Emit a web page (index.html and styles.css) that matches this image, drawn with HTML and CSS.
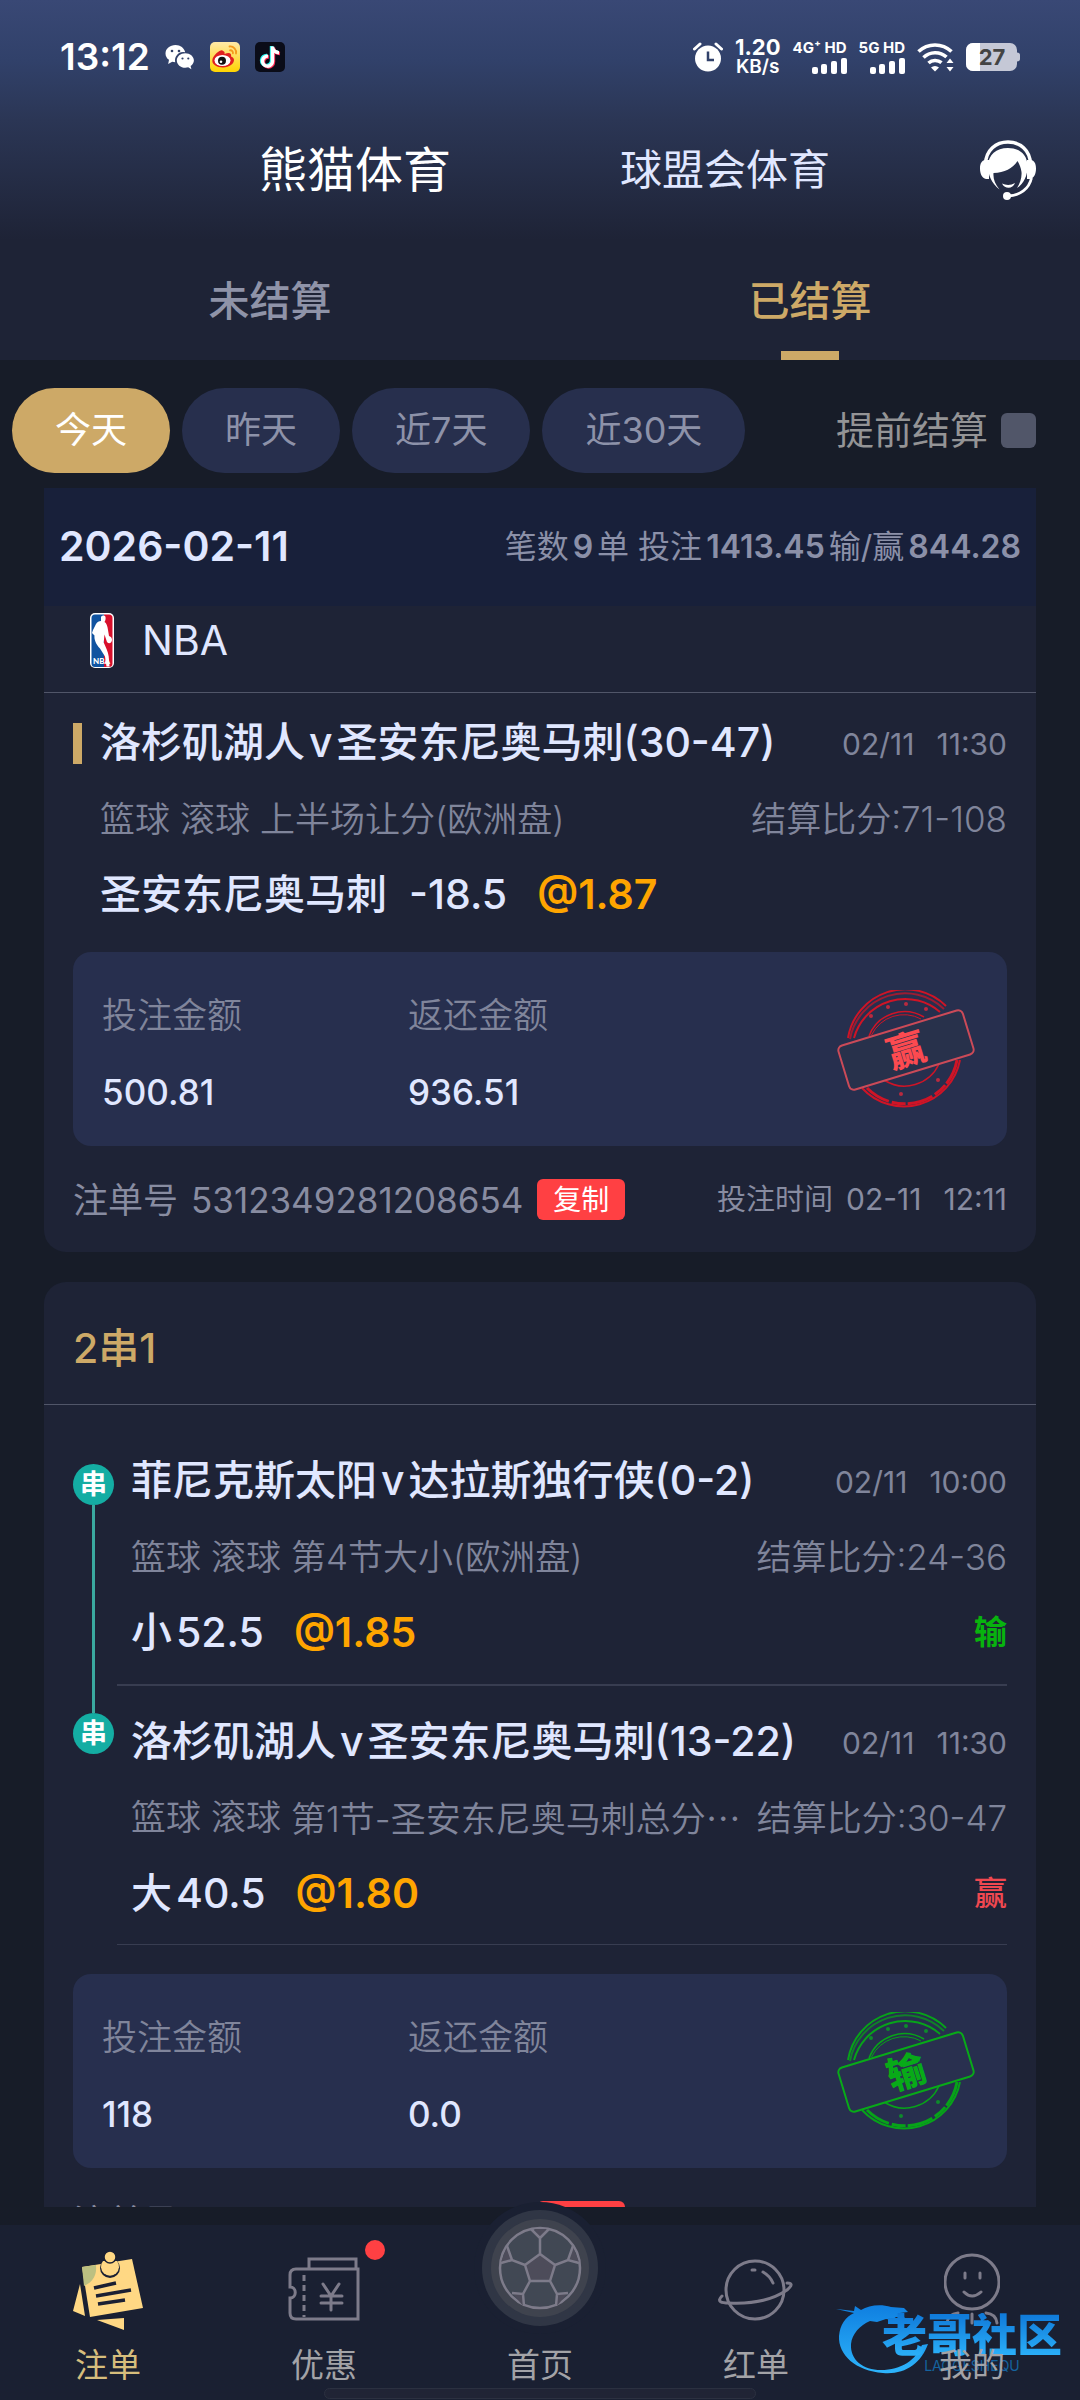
FILE: index.html
```html
<!DOCTYPE html>
<html lang="zh-CN">
<head>
<meta charset="utf-8">
<meta name="viewport" content="width=device-width, initial-scale=1">
<title>注单</title>
<link rel="stylesheet" href="styles.css">
</head>
<body>
<header class="header">
  <div class="status">
    <div class="status-side">
      <span class="clock">13:12</span>
      <svg width="30" height="26" viewBox="0 0 30 26" aria-hidden="true">
        <path fill="#fff" d="M10.500 1C4.900 1 .5 4.700 .5 9.400c0 2.600 1.300 4.900 3.500 6.400L3.200 20l4-2.200c1 .3 2 .4 3 .4A8.200 8.200 0 0 1 20.200 8.300C19.400 4.100 15.400 1 10.500 1z"/>
        <path fill="#fff" d="M20.300 9.300c-4.700 0-8.500 3.200-8.500 7.200s3.800 7.300 8.500 7.300c1 0 2-.2 2.900-.5l3.200 2-.8-3.300c2-1.300 3.300-3.300 3.300-5.500 0-4-3.900-7.200-8.600-7.200z"/>
        <g fill="#31416a"><circle cx="7" cy="7" r="1.300"/><circle cx="14" cy="7" r="1.300"/><circle cx="17.500" cy="14.500" r="1.100"/><circle cx="23.300" cy="14.500" r="1.100"/></g>
      </svg>
      <svg width="30" height="30" viewBox="0 0 30 30" aria-hidden="true">
        <defs><linearGradient id="wb" x1="0" y1="0" x2="0" y2="1"><stop offset="0" stop-color="#ffe9a8"/><stop offset="1" stop-color="#ffd400"/></linearGradient></defs>
        <rect width="30" height="30" rx="5" fill="url(#wb)"/>
        <path fill="#e02020" d="M13 9c-1-3-9 3-10.500 8-1.400 5.500 4.500 8.500 10.500 8.500 6.500 0 11-4 11-7.500 0-2-1.500-3-3-3.500 1-3.500-2-4.500-6.500-2.500.4-1.300.2-2.400-1.500-3z"/>
        <ellipse cx="12.500" cy="18.500" rx="8" ry="5.500" fill="#fff"/>
        <circle cx="12" cy="18.800" r="4" fill="#111"/><circle cx="11" cy="19.800" r="1.300" fill="#fff"/>
        <path d="M19.500 4.500c4-.6 7.300 3 6.500 7M20 8.300c2-.3 3.300 1.200 2.900 3" fill="none" stroke="#f59a1b" stroke-width="1.800" stroke-linecap="round"/>
      </svg>
      <svg width="30" height="30" viewBox="0 0 30 30" aria-hidden="true">
        <rect width="30" height="30" rx="5" fill="#0a0c18"/>
        <g fill="none" stroke-width="3.400"><path stroke="#25f4ee" d="M16.500 4v14.500a5 5 0 1 1-4.500-5M16.500 4.500c.4 3 2.800 5.500 6.500 5.700"/><path stroke="#fe2c55" d="M18.500 5.500V20a5 5 0 1 1-4.500-5M18.500 6c.4 3 2.800 5.300 6.500 5.500"/><path stroke="#fff" d="M17.500 4.500v14.700a5 5 0 1 1-4.500-5M17.500 5c.4 3 2.800 5.500 6.500 5.700"/></g>
      </svg>
    </div>
    <div class="status-side status-right">
      <svg width="30" height="30" viewBox="0 0 30 30" aria-hidden="true">
        <circle cx="15" cy="16.500" r="13" fill="#fff"/>
        <path d="M1.500 7 7 2M28.500 7 23 2" stroke="#fff" stroke-width="3" stroke-linecap="round"/>
        <path d="M15 9.500V18h6" fill="none" stroke="#31416a" stroke-width="2.500"/>
      </svg>
      <span class="speed"><b>1.20</b><span>KB/s</span></span>
      <span class="signal"><b>4G⁺ HD</b>
        <svg width="35" height="16" viewBox="0 0 35 16" aria-hidden="true"><g fill="#fff"><rect y="9" width="6" height="7" rx="2"/><rect x="9" y="6" width="6" height="10" rx="2"/><rect x="19" y="3" width="6" height="13" rx="2"/><rect x="29" width="6" height="16" rx="2"/></g></svg>
      </span>
      <span class="signal"><b>5G HD</b>
        <svg width="35" height="16" viewBox="0 0 35 16" aria-hidden="true"><g fill="#fff"><rect y="9" width="6" height="7" rx="2"/><rect x="9" y="6" width="6" height="10" rx="2"/><rect x="19" y="3" width="6" height="13" rx="2"/><rect x="29" width="6" height="16" rx="2"/></g></svg>
      </span>
      <svg width="37" height="30" viewBox="0 0 37 30" aria-hidden="true">
        <path d="M1.500 9.500a24 24 0 0 1 33 0M6.500 15.500a17 17 0 0 1 23-.5M11.500 21a10 10 0 0 1 13-.3" fill="none" stroke="#fff" stroke-width="3.600"/>
        <path d="M14 25.500a6 6 0 0 1 8 0l-4 4z" fill="#fff"/><path d="m33 16.500 3.500 4.500h-7zM33 29.500l3.500-4.500h-7z" fill="#fff"/>
      </svg>
      <svg width="54" height="28" viewBox="0 0 54 28" aria-hidden="true">
        <rect width="51" height="28" rx="7" fill="#c5c8d6"/><path d="M7 0h7v28H7a7 7 0 0 1-7-7V7a7 7 0 0 1 7-7z" fill="#fff"/>
        <path d="M51 9.500c2 0 3 1 3 2.500v4c0 1.500-1 2.500-3 2.500z" fill="#c5c8d6"/>
        <text x="26" y="22" text-anchor="middle" class="battery">27</text>
      </svg>
    </div>
  </div>
  <nav class="brands">
    <button class="brand brand-on" type="button">熊猫体育</button>
    <button class="brand" type="button">球盟会体育</button>
    <button class="service" type="button" aria-label="客服">
      <svg width="56" height="60" viewBox="0 0 56 60" aria-hidden="true">
        <path d="M5.500 24C6 10 16 2 28 2s22 8 22.500 22" fill="none" stroke="#fff" stroke-width="3.500"/>
        <path d="M28 8C16 8 8.500 15 8 25c-.2 9 3 18 11.500 24.500C15 44 13 39 13.500 33c11-.5 19-4.500 24-12 2 3 3.500 7 4 11 .5 6-1.500 11.500-4.500 16C44.500 43 48 34 47.500 25 47 15 40 8 28 8z" fill="#fff"/>
        <path d="M5 20c-3 .5-5 3-5 8.500S2 38 6 39h3V20zM51 20c3 .5 5 3 5 8.500S54 38 50 39h-3V20z" fill="#fff"/>
        <path d="M51.500 38C49 49 40 55.500 28 56" fill="none" stroke="#fff" stroke-width="2.800"/>
        <circle cx="27" cy="56" r="4" fill="#fff"/><path d="M22 43.500c4 2 9 2 13-.5-2 6-10 6.500-13 .5z" fill="#fff"/>
      </svg>
    </button>
  </nav>
  <nav class="tabs">
    <button class="tab" type="button">未结算</button>
    <button class="tab tab-on" type="button">已结算</button>
  </nav>
</header>

<section class="filters">
  <button class="chip chip-on" type="button">今天</button>
  <button class="chip" type="button">昨天</button>
  <button class="chip" type="button">近7天</button>
  <button class="chip" type="button">近30天</button>
  <label class="early">提前结算<input class="early-box" type="checkbox"></label>
</section>

<main class="list">
  <div class="day">
    <h2 class="day-date">2026-02-11</h2>
    <p class="day-sum">笔数<b>9</b>单 投注<b>1413.45</b>输/赢<b>844.28</b></p>
  </div>

  <article class="card card-first">
    <div class="league">
      <svg width="24" height="55" viewBox="0 0 24 55" aria-hidden="true">
        <rect width="24" height="55" rx="5" fill="#fff"/>
        <path d="M5 1.500h9V54H5a3.500 3.500 0 0 1-3.500-3.500V5A3.500 3.500 0 0 1 5 1.500z" fill="#1053a0"/>
        <path d="M14 1.500h5A3.500 3.500 0 0 1 22.500 5v45.500A3.500 3.500 0 0 1 19 54h-5z" fill="#d8102c"/>
        <path d="M11 4c1-2 4-2 4.500 0 .4 2-.3 4-1 5 2 1 3 4 3.500 8l1 6c3 1 4 4 2 6.500-2 1.500-4 .5-4.500-2l-2-6-.8 8c2 5 4.500 9 5 14l.8 10h-3l-1.500-10-5-8c-4-4-6-9-5.500-13L2 20l1-3 3-6c1-2 3-3 5-3z" fill="#fff"/>
        <text x="3" y="51" class="nba-mark">NBA</text>
      </svg>
      <h3 class="league-name">NBA</h3>
    </div>
    <div class="bet">
      <div class="row"><h4 class="match match-bar">洛杉矶湖人<span class="vs">v</span>圣安东尼奥马刺(30-47)</h4><time class="time"><span>02/11</span><span>11:30</span></time></div>
      <div class="row muted"><p class="kind"><span>篮球</span><span>滚球</span><span>上半场让分(欧洲盘)</span></p><p>结算比分:71-108</p></div>
      <div class="row"><p class="pick"><span>圣安东尼奥马刺</span><span class="num">-18.5</span><b class="odds">@1.87</b></p></div>
    </div>
    <div class="panel">
      <dl class="money"><dt>投注金额</dt><dd>500.81</dd></dl>
      <dl class="money"><dt>返还金额</dt><dd>936.51</dd></dl>
      <svg class="stamp stamp-win" width="140" height="118" viewBox="0 0 140 118" role="img" aria-label="赢">
        <g fill="none" class="stamp-ring">
          <path d="M12 48A58 58 0 0 1 110 16M124 70A57 57 0 0 1 26 98" stroke-width="2"/>
          <path d="M14 49A56 56 0 0 1 108 19" stroke-width="2" opacity=".7"/><path d="M121 70A53 53 0 0 1 31 98" stroke-width="3" stroke-dasharray="26 2 14 3"/>
          <path d="M18 48A53 53 0 0 1 104 22" stroke-width="2"/>
          <path d="M33 46A38 38 0 0 1 88 27M103 74A38 38 0 0 1 48 90" stroke-width="1.500"/><path d="M35.500 45A36 36 0 0 1 85 29" stroke-width="1"/>
        </g>
        <g class="stamp-dots"><circle cx="35" cy="26" r="2"/><circle cx="52" cy="17" r="2"/><circle cx="70" cy="14" r="2"/><circle cx="90" cy="19" r="2"/><circle cx="102" cy="90" r="2"/><circle cx="65" cy="104" r="2"/></g>
        <g transform="rotate(-17 70 60)"><rect class="stamp-plate" x="5" y="37" width="130" height="46" rx="5" stroke-width="2"/><text x="70" y="74" text-anchor="middle" class="stamp-text">赢</text></g>
      </svg>
    </div>
    <div class="foot">
      <p class="order">注单号<span>5312349281208654</span></p>
      <button class="copy" type="button">复制</button>
      <p class="placed">投注时间<span>02-11</span><span class="placed-hour">12:11</span></p>
    </div>
  </article>

  <article class="card">
    <h3 class="combo">2串1</h3>
    <div class="legs">
      <div class="leg">
        <div class="rail rail-start"><span class="rail-dot">串</span><i class="rail-line"></i></div>
        <div class="leg-body">
          <div class="row"><h4 class="match">菲尼克斯太阳<span class="vs">v</span>达拉斯独行侠(0-2)</h4><time class="time"><span>02/11</span><span>10:00</span></time></div>
          <div class="row muted"><p class="kind"><span>篮球</span><span>滚球</span><span>第4节大小(欧洲盘)</span></p><p>结算比分:24-36</p></div>
          <div class="row"><p class="pick"><span>小<span class="line-num">52.5</span></span><b class="odds">@1.85</b></p><b class="result lose">输</b></div>
        </div>
      </div>
      <div class="leg">
        <div class="rail rail-end"><i class="rail-line"></i><span class="rail-dot">串</span></div>
        <div class="leg-body leg-last">
          <div class="row"><h4 class="match">洛杉矶湖人<span class="vs">v</span>圣安东尼奥马刺(13-22)</h4><time class="time"><span>02/11</span><span>11:30</span></time></div>
          <div class="row muted"><p class="kind"><span>篮球</span><span>滚球</span><span>第1节-圣安东尼奥马刺总分<span class="more">…</span></span></p><p>结算比分:30-47</p></div>
          <div class="row"><p class="pick"><span>大<span class="line-num">40.5</span></span><b class="odds">@1.80</b></p><b class="result win">赢</b></div>
        </div>
      </div>
    </div>
    <div class="panel">
      <dl class="money"><dt>投注金额</dt><dd>118</dd></dl>
      <dl class="money"><dt>返还金额</dt><dd>0.0</dd></dl>
      <svg class="stamp stamp-lose" width="140" height="118" viewBox="0 0 140 118" role="img" aria-label="输">
        <g fill="none" class="stamp-ring">
          <path d="M12 48A58 58 0 0 1 110 16M124 70A57 57 0 0 1 26 98" stroke-width="2"/>
          <path d="M14 49A56 56 0 0 1 108 19" stroke-width="2" opacity=".7"/><path d="M121 70A53 53 0 0 1 31 98" stroke-width="3" stroke-dasharray="26 2 14 3"/>
          <path d="M18 48A53 53 0 0 1 104 22" stroke-width="2"/>
          <path d="M33 46A38 38 0 0 1 88 27M103 74A38 38 0 0 1 48 90" stroke-width="1.500"/><path d="M35.500 45A36 36 0 0 1 85 29" stroke-width="1"/>
        </g>
        <g class="stamp-dots"><circle cx="35" cy="26" r="2"/><circle cx="52" cy="17" r="2"/><circle cx="70" cy="14" r="2"/><circle cx="90" cy="19" r="2"/><circle cx="102" cy="90" r="2"/><circle cx="65" cy="104" r="2"/></g>
        <g transform="rotate(-17 70 60)"><rect class="stamp-plate" x="5" y="37" width="130" height="46" rx="5" stroke-width="2"/><text x="70" y="74" text-anchor="middle" class="stamp-text">输</text></g>
      </svg>
    </div>
    <div class="foot">
      <p class="order">注单号<span>5312349281208654</span></p>
      <button class="copy" type="button">复制</button>
    </div>
  </article>
</main>

<nav class="dock">
  <a class="dock-item dock-on" href="#bets">
    <svg width="70" height="80" viewBox="0 0 70 80" aria-hidden="true">
      <path d="M7 34 0 61l12 5zM24 70l27 10V68z" fill="#ffd884"/>
      <path d="m9 17 50-8 11 49-53 9z" fill="#ffd884"/><path d="m9 17 14-2c1 10-3 17-12 21z" fill="#bcc081"/>
      <path d="M21 38l22-5M23 46l35-6M25 54l27-4" stroke="#1b2033" stroke-width="3.500"/>
      <circle cx="37" cy="18" r="10" fill="#1b2033"/><path d="M30 11a9 9 0 1 0 14 0z" fill="#ffd884"/><circle cx="37" cy="7" r="6" fill="#ffd884" stroke="#1b2033" stroke-width="1.500"/>
    </svg>
    <span>注单</span>
  </a>
  <a class="dock-item" href="#promo">
    <svg width="72" height="66" viewBox="0 0 72 66" fill="none" stroke="#7d7b8a" stroke-width="3" aria-hidden="true">
      <path d="M21 12V2h47v10M70 12H8c-4 0-6 2-6 6v12c7 0 7 11 0 11v15c0 4 2 6 6 6h62z"/>
      <path d="M16 18v42" stroke-dasharray="6 4"/><path d="m35 27 8 12 8-12M43 39v14M33 39h21M33 46h21" stroke-linecap="round"/>
    </svg>
    <span>优惠</span>
    <i class="dot"></i>
  </a>
  <a class="dock-item dock-home" href="#home">
    <svg class="ball" width="132" height="132" viewBox="0 0 132 132" aria-hidden="true">
      <circle cx="66" cy="66" r="66" fill="#1a2032"/><circle cx="66" cy="66" r="58" fill="#303645"/><circle cx="66" cy="66" r="49" fill="#3f434e"/>
      <circle cx="66" cy="66" r="40" fill="#414854" stroke="#7d7b8a" stroke-width="2.500"/>
      <path d="m66 52 15 11-5 16H56l-5-16zM60 27l6 8 7-8zM27 60l10-3-4-12zM105 60l-10-3 4-12zM39 92l9 1 2 12zM93 92l-9 1-2 12z" fill="#4d4c5a"/>
      <path d="m66 52 15 11-5 16H56l-5-16zM66 52V36l-9-9M66 36l9-9M51 63l-13-5-11 3M38 58l-5-14M81 63l13-5 11 3M94 58l5-14M56 79l-7 13-11-1M49 92l1 12M76 79l7 13 11-1M83 92l-1 12" fill="none" stroke="#7d7b8a" stroke-width="2.500"/>
    </svg>
    <span>首页</span>
  </a>
  <a class="dock-item" href="#tips">
    <svg width="76" height="64" viewBox="0 0 76 64" fill="none" stroke="#7d7b8a" stroke-width="3" stroke-linecap="round" aria-hidden="true">
      <circle cx="37" cy="32" r="29"/><path d="M34 12h3M45 14q7 4 10 11M4 38c-6 6 0 7 7 7 20 1 42-2 58-13 6-5 5-7 0-7"/>
    </svg>
    <span>红单</span>
  </a>
  <a class="dock-item" href="#me">
    <svg width="56" height="76" viewBox="0 0 56 76" fill="none" stroke="#7d7b8a" stroke-width="3" stroke-linecap="round" aria-hidden="true">
      <circle cx="28" cy="30" r="27"/><path d="M21 21v5M36 21v5M20 40q8 8 17 0M3 71q1-9 11-10M53 71q-1-9-11-10M28 62v9"/>
    </svg>
    <span>我的</span>
  </a>
  <div class="mark">
    <svg width="92" height="80" viewBox="0 0 92 80" aria-hidden="true">
      <defs><linearGradient id="dr" x1="0" y1="0" x2="0" y2="1"><stop offset="0" stop-color="#0f7fe0"/><stop offset="1" stop-color="#2db4fb"/></linearGradient></defs>
      <path d="M0 10c7 1 12 1 18 2l1-5 6 4c8-5 20-6 30-3l13 1 4 4-8 1 5 5-9-1-4 3-6-1-9 3-7-1c-10 4-18 13-19 23-1 16 12 26 30 26 20 0 35-10 41-25l6-1C85 65 68 76 47 74 20 72 2 56 3 37 4 26 9 18 18 14z" fill="url(#dr)"/>
    </svg>
    <div class="mark-words"><strong>老哥社区</strong><small>LAOGESHEQU</small></div>
  </div>
  <i class="home-pill"></i>
</nav>
</body>
</html>
```
FILE: styles.css
```css
* { box-sizing: border-box; }

:root {
  --ink: #e0e7ff;
  --muted: #80859b;
  --gold: #cda967;
  --page: #171c28;
  --card: #1e2336;
  --panel: #272f4e;
  --bar: #1a2032;
  --red: #ff4043;
}

body {
  margin: 0;
  height: 100vh;
  display: flex;
  flex-direction: column;
  background: var(--page);
  color: var(--ink);
  font-family: Inter, "Noto Sans CJK SC", sans-serif;
  line-height: 1.2;
}

h2, h3, h4, p, dl, dd { margin: 0; font-weight: 400; }

button {
  border: 0;
  padding: 0;
  background: none;
  color: inherit;
  font-family: inherit;
  line-height: inherit;
}

svg { display: block; flex: none; }

/* header */
.header { background: linear-gradient(#394875 0, #31416a 60px, #2b3655 120px, #1e2336 240px); }

.status {
  display: flex;
  justify-content: space-between;
  align-items: center;
  height: 114px;
  padding: 0 60px;
  color: #fff;
}

.status-side { display: flex; align-items: center; gap: 15px; }
.status-right { gap: 12px; }
.clock { font-size: 37px; font-weight: 600; line-height: 40px; }

.speed {
  display: flex;
  flex-direction: column;
  align-items: center;
  font-size: 19px;
  font-weight: 600;
  line-height: 20px;
}

.speed b { font-size: 22px; font-weight: 700; }

.signal {
  display: flex;
  flex-direction: column;
  align-items: flex-end;
  gap: 2px;
  font-size: 15px;
  line-height: 16px;
}

.signal b { font-weight: 700; }
.battery { font: 700 22px Inter, sans-serif; fill: #444; }

.brands {
  display: grid;
  grid-template-columns: 1fr 1fr;
  position: relative;
  height: 110px;
  padding: 2px 170px 0;
}

.brand { font-size: 42px; }
.brand-on { font-size: 48px; color: #fff; }

.service { position: absolute; right: 44px; top: 26px; }

.tabs { display: grid; grid-template-columns: 1fr 1fr; height: 136px; }

.tab {
  position: relative;
  padding-top: 20px;
  font-size: 41px;
  font-weight: 500;
  color: #8f93a8;
}

.tab-on { color: var(--gold); }

.tab-on::after {
  content: "";
  position: absolute;
  left: 50%;
  bottom: 0;
  width: 58px;
  height: 9px;
  margin-left: -29px;
  background: var(--gold);
}

/* filters */
.filters {
  display: flex;
  align-items: center;
  gap: 12px;
  padding: 28px 44px 15px 12px;
}

.chip {
  height: 85px;
  padding: 0 43px;
  border-radius: 43px;
  background: #272f4d;
  color: #8d92a9;
  font-size: 36px;
}

.chip-on { background: var(--gold); color: #fff; }

.early {
  display: flex;
  align-items: center;
  gap: 13px;
  margin-left: auto;
  font-size: 38px;
  color: #949496;
}

.early-box {
  appearance: none;
  width: 35px;
  height: 35px;
  margin: 0;
  border-radius: 6px;
  background: #515669;
}

/* list */
.list {
  flex: 1;
  min-height: 0;
  overflow: auto;
  scrollbar-width: none;
  margin-bottom: 18px;
  padding: 0 44px;
}

.day {
  display: flex;
  justify-content: space-between;
  align-items: center;
  height: 118px;
  padding: 0 15px;
  background: #18203a;
}

.day-date { font-size: 41px; font-weight: 600; }
.day-sum { font-size: 32px; color: #8b90a8; }
.day-sum b { margin: 0 4px; font-size: 32px; font-weight: 600; }
.day-sum b:last-child { margin-right: 0; }

.card { margin-bottom: 30px; border-radius: 22px; background: var(--card); }
.card-first { border-radius: 0 0 22px 22px; }

.league {
  display: flex;
  align-items: center;
  gap: 28px;
  height: 87px;
  padding: 0 46px 17px;
  border-bottom: 1px solid #515669;
}

.league-name { font-size: 41px; }
.nba-mark { font: 900 8px Lato, sans-serif; fill: #fff; }

.bet { padding: 12px 29px 0 56px; }

.row {
  display: flex;
  justify-content: space-between;
  align-items: center;
  height: 76px;
  white-space: nowrap;
}

.match { position: relative; font-size: 41px; font-weight: 500; }

.match-bar::before {
  content: "";
  position: absolute;
  left: -27px;
  top: 50%;
  width: 9px;
  height: 41px;
  margin-top: -20px;
  background: var(--gold);
}

.vs { margin: 0 4px; }
.time { display: flex; gap: 22px; padding-top: 2px; font-size: 30px; color: var(--muted); }
.muted { font-size: 35px; font-weight: 350; color: var(--muted); }
.muted p { font-weight: inherit; }
.kind { display: flex; gap: 10px; }
.more { font-family: "Noto Sans CJK SC", sans-serif; }
.pick { display: flex; font-size: 41px; font-weight: 500; }
.num { margin-left: 22px; }
.line-num { margin-left: 4px; }
.odds { margin-left: 30px; font-weight: 600; color: #ffa500; }
.result { font-size: 33px; }
.lose { color: #08b30e; }
.win { color: #f04850; font-weight: 500; }

.panel {
  display: grid;
  grid-template-columns: 35% 35% 1fr;
  align-items: center;
  height: 194px;
  margin: 19px 29px 0;
  padding: 0 31px 0 29px;
  border-radius: 18px;
  background: var(--panel);
}

.money { padding-top: 10px; line-height: 77px; }
.money dt { font-size: 35px; font-weight: 350; color: var(--muted); }
.money dd { font-size: 35px; font-weight: 500; }

.stamp { justify-self: end; }
.stamp-text { font: 900 38px "Noto Sans CJK SC", sans-serif; }
.stamp-win .stamp-ring { stroke: #cf1426; }
.stamp-win .stamp-dots { fill: #b92a3f; }
.stamp-win .stamp-plate { fill: #28314b; stroke: #cb4a58; }
.stamp-win .stamp-text { fill: #fc4a50; }
.stamp-lose .stamp-ring { stroke: #07a319; }
.stamp-lose .stamp-dots { fill: #0e8a2c; }
.stamp-lose .stamp-plate { fill: #29304f; stroke: #08aa18; }
.stamp-lose .stamp-text { fill: #08aa18; }

.foot {
  display: flex;
  align-items: center;
  height: 106px;
  padding: 1px 29px 0;
  color: #888ca1;
}

.order { font-size: 35px; }
.order span { margin-left: 13px; }

.copy {
  width: 88px;
  height: 41px;
  padding-top: 3px;
  margin-left: 14px;
  border-radius: 6px;
  background: var(--red);
  color: #fff;
  font-size: 28px;
}

.placed { margin-left: auto; font-size: 29px; }
.placed span { margin-left: 13px; font-size: 30px; }
.placed .placed-hour { margin-left: 22px; }

/* parlay */
.combo {
  height: 123px;
  padding: 10px 29px 0;
  border-bottom: 1px solid #515669;
  font-size: 41px;
  font-weight: 500;
  line-height: 112px;
  color: var(--gold);
}

.legs { padding: 38px 29px 10px; }
.leg { display: grid; grid-template-columns: 41px 1fr; gap: 3px; }
.leg-body { padding: 0 0 13px 14px; border-bottom: 2px solid #383d51; }
.leg-last { padding: 18px 0 12px 14px; border-bottom-width: 1px; }

.rail { display: flex; flex-direction: column; align-items: center; }
.rail-start { padding-top: 21px; }
.rail-line { width: 3px; background: #3aa99f; }
.rail-start .rail-line { flex: 1; }
.rail-end .rail-line { height: 27px; }

.rail-dot {
  width: 41px;
  height: 41px;
  border-radius: 50%;
  background: #14ada3;
  color: #fff;
  font-size: 27px;
  font-weight: 700;
  line-height: 42px;
  text-align: center;
}

/* dock */
.dock {
  display: grid;
  grid-template-columns: repeat(5, 1fr);
  position: relative;
  height: 175px;
  background: var(--bar);
}

.dock-item {
  display: flex;
  flex-direction: column;
  align-items: center;
  justify-content: space-between;
  position: relative;
  padding: 25px 0 15px;
  color: #a3a3a7;
  font-size: 33px;
  line-height: 40px;
  text-decoration: none;
}

.dock-item svg { height: 80px; }
.dock-item span { position: relative; z-index: 2; }
.dock-on { color: #d6bd7c; }
.dock-home { justify-content: flex-end; }
.dock-item .ball { position: absolute; top: -23px; height: 132px; }

.dot {
  position: absolute;
  left: 50%;
  top: 15px;
  width: 20px;
  height: 20px;
  margin-left: 41px;
  border-radius: 50%;
  background: var(--red);
}

.mark {
  display: flex;
  position: absolute;
  right: 18px;
  top: 74px;
  z-index: 1;
  pointer-events: none;
}

.mark-words {
  display: flex;
  flex-direction: column;
  align-items: center;
  margin: 14px 0 0 -46px;
}

.mark-words strong {
  font-size: 45px;
  font-weight: 900;
  line-height: 46px;
  background: linear-gradient(#0f78d8, #2db4fb);
  background-clip: text;
  color: transparent;
}

.mark-words small { font-size: 14px; line-height: 14px; color: #15639f; }

.home-pill {
  position: absolute;
  left: 30%;
  right: 30%;
  bottom: 1px;
  height: 11px;
  border: 1px solid #2b3040;
  border-radius: 6px;
  background: #202435;
}
```
